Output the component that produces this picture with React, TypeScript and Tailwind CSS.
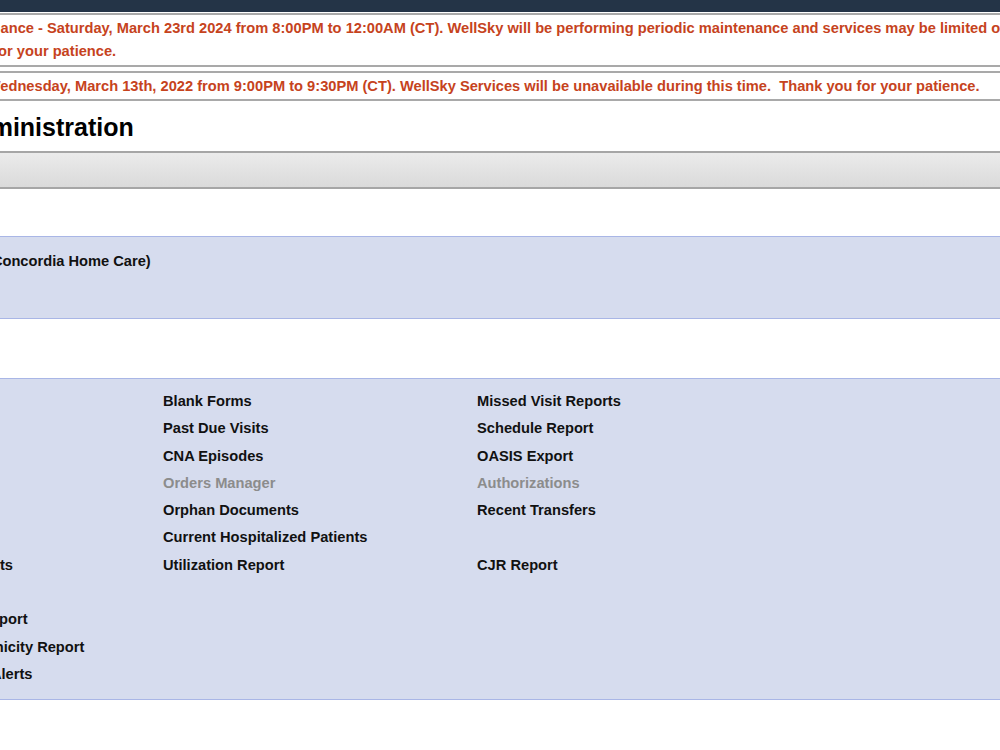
const columns: { label: string; disabled?: boolean }[][] = [
  [
    { label: "Patient Roster" },
    { label: "Visit Log" },
    { label: "Payroll Export" },
    { label: "Census Report" },
    { label: "Clinician List" },
    { label: "Audit Trail" },
    { label: "Unsigned Orders Alerts" },
    { label: "" },
    { label: "Patient Admission Report" },
    { label: "Patient Race and Ethnicity Report" },
    { label: "Patient Certification Alerts" },
  ],
  [
    { label: "Blank Forms" },
    { label: "Past Due Visits" },
    { label: "CNA Episodes" },
    { label: "Orders Manager", disabled: true },
    { label: "Orphan Documents" },
    { label: "Current Hospitalized Patients" },
    { label: "Utilization Report" },
  ],
  [
    { label: "Missed Visit Reports" },
    { label: "Schedule Report" },
    { label: "OASIS Export" },
    { label: "Authorizations", disabled: true },
    { label: "Recent Transfers" },
    { label: "" },
    { label: "CJR Report" },
  ],
];

export default function App() {
  return <div className="h-[750px] w-[1000px] overflow-hidden bg-white font-['Liberation_Sans',Arial,sans-serif] text-[#111]">
    <div className="-ml-[200px] w-[1400px]">
      <div className="h-[12px] bg-[#243447]" />

      <div className="mt-[1px] whitespace-nowrap border-y-2 border-[#a9a9a9] py-[2px] pl-[67px] text-[14.67px] font-bold leading-[23px] text-[#c6431d]">
        <div>Scheduled Maintenance - Saturday, March 23rd 2024 from 8:00PM to 12:00AM (CT). WellSky will be performing periodic maintenance and services may be limited or unavailable during these</div>
        <div>hours. Thank you for your patience.</div>
      </div>

      <div className="mt-[4px] whitespace-pre border-y-2 border-[#a9a9a9] pb-[1px] pt-[2px] pl-[67px] text-[14.67px] font-bold leading-[23px] text-[#c6431d]">
        System Outage - Wednesday, March 13th, 2022 from 9:00PM to 9:30PM (CT). WellSky Services will be unavailable during this time.  Thank you for your patience.
      </div>

      <h1 className="h-[50px] whitespace-nowrap pl-[61px] text-[25px] font-bold leading-[52px] text-black">Agency Administration</h1>

      <div className="h-[38px] border-y-2 border-[#a6a6a6] bg-gradient-to-b from-[#ebebeb] to-[#dadada]" />

      <div className="h-[47px]" />

      <div className="h-[83px] whitespace-nowrap border-y border-[#a9b6e6] bg-[#d6dcee] pl-[29px] pt-[13px] text-[14.67px] font-bold leading-[23px]">
        Concordia Home Care (Concordia Home Care)
      </div>

      <div className="h-[59px]" />

      <div className="grid grid-cols-[314px_314px_314px] border-y border-[#a9b6e6] bg-[#d6dcee] pb-[11px] pl-[49px] pt-[9px] text-[14.67px] font-bold leading-[27.3px]">
        {columns.map((column, ci) => <div key={ci} className="flex flex-col">
          {column.map((item, ri) => <a key={ri} className={`h-[27.3px] whitespace-nowrap ${item.disabled ? "text-[#8c8c8c]" : "text-[#111]"}`}>
            {item.label}
          </a>)}
        </div>)}
      </div>
    </div>
  </div>;
}
